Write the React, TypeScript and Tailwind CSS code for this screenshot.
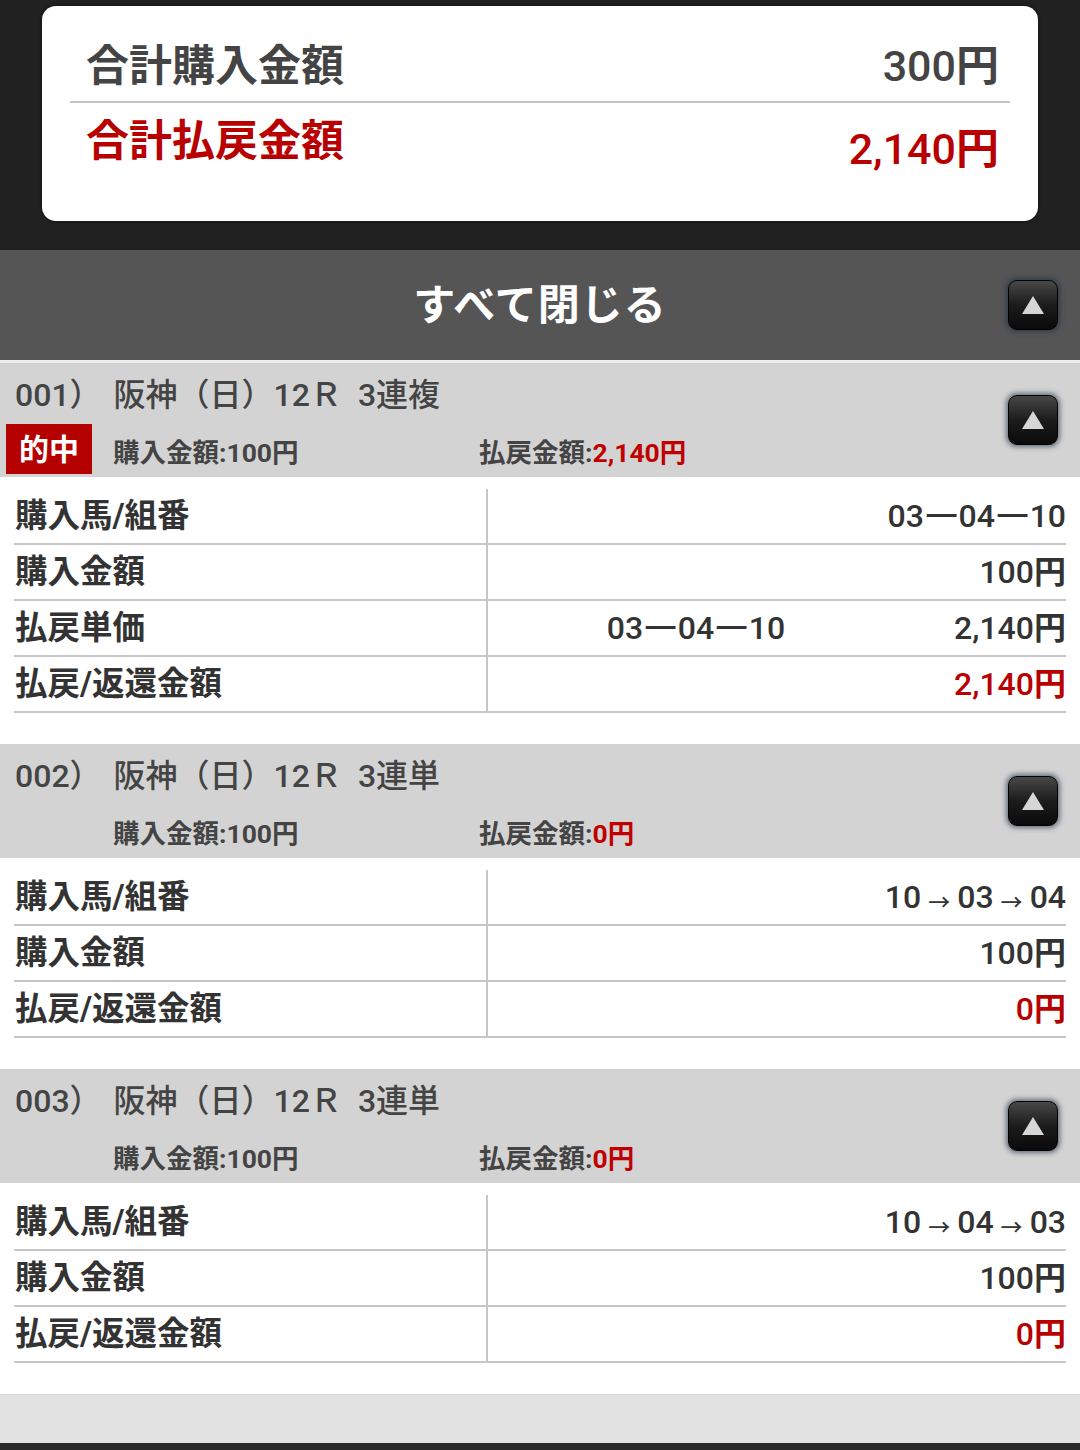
const font = "font-['Roboto','Noto_Sans_CJK_JP',sans-serif]"

type Row = { label: string; mid?: React.ReactNode; value: React.ReactNode; red?: boolean }

type Bet = {
  no: string
  kind: string
  hit: boolean
  payout: string
  rows: Row[]
}

const Arrow = () => <span className="text-[22px] mx-[7px] relative top-[2px]">→</span>
const Dash = () => <span className="inline-block scale-x-[1.4] mx-[5px]">—</span>

// digits in Roboto, the yen sign heavier like the reference
const Yen = ({ v }: { v: string }) => (
  <>
    {v}
    <span className="font-bold">円</span>
  </>
)

const Combo = ({ a, b, c }: { a: string; b: string; c: string }) => (
  <>
    {a}
    <Dash />
    {b}
    <Dash />
    {c}
  </>
)

const bets: Bet[] = [
  {
    no: '001',
    kind: '3連複',
    hit: true,
    payout: '2,140円',
    rows: [
      { label: '購入馬/組番', value: <Combo a="03" b="04" c="10" /> },
      { label: '購入金額', value: <Yen v="100" /> },
      { label: '払戻単価', mid: <Combo a="03" b="04" c="10" />, value: <Yen v="2,140" /> },
      { label: '払戻/返還金額', value: <Yen v="2,140" />, red: true },
    ],
  },
  {
    no: '002',
    kind: '3連単',
    hit: false,
    payout: '0円',
    rows: [
      {
        label: '購入馬/組番',
        value: (
          <>
            10<Arrow />03<Arrow />04
          </>
        ),
      },
      { label: '購入金額', value: <Yen v="100" /> },
      { label: '払戻/返還金額', value: <Yen v="0" />, red: true },
    ],
  },
  {
    no: '003',
    kind: '3連単',
    hit: false,
    payout: '0円',
    rows: [
      {
        label: '購入馬/組番',
        value: (
          <>
            10<Arrow />04<Arrow />03
          </>
        ),
      },
      { label: '購入金額', value: <Yen v="100" /> },
      { label: '払戻/返還金額', value: <Yen v="0" />, red: true },
    ],
  },
]

const ToggleButton = () => (
  <button className="w-[50px] h-[50px] rounded-[9px] border border-black bg-gradient-to-b from-[#484848] via-[#1c1c1c] to-[#0a0a0a] shadow-[0_0_5px_2px_rgba(25,45,70,0.6)] flex items-center justify-center">
    <svg width="22" height="18" viewBox="0 0 22 18">
      <polygon points="11,0 22,18 0,18" fill="#d6d6d6" />
    </svg>
  </button>
)

const BetItem = ({ bet }: { bet: Bet }) => (
  <div className="bg-white pb-[31px]">
    <div className="bg-[#d3d3d3] h-[114px] flex items-center">
      <div className="flex-1 flex flex-col">
        <div className="h-[58px] flex items-center pl-[15px] text-[32px] font-medium text-[#444] leading-none">
          <span>{bet.no}）</span>
          <span className="ml-[12px]">阪神（日）12Ｒ&nbsp;&nbsp;{bet.kind}</span>
        </div>
        <div className="h-[50px] flex items-center pl-[6px]">
          {bet.hit ? (
            <div className="w-[86px] h-[50px] bg-[#b50000] text-white text-[30px] font-bold flex items-center justify-center">
              的中
            </div>
          ) : (
            <div className="w-[86px]" />
          )}
          <div className="ml-[21px] w-[366px] text-[26.5px] font-bold text-[#444] mt-[8px]">購入金額:100円</div>
          <div className="text-[26.5px] font-bold text-[#444] mt-[8px]">
            払戻金額:<span className="text-[#c00000]">{bet.payout}</span>
          </div>
        </div>
      </div>
      <div className="pr-[22px]">
        <ToggleButton />
      </div>
    </div>
    <div className="px-[14px] pt-[12px]">
      {bet.rows.map((row, i) => (
        <div key={i} className="flex h-[56px] border-b-2 border-[#c6c6c6]">
          <div className="w-[472px] shrink-0 flex items-center pl-[1px] text-[32.5px] font-bold text-[#333]">{row.label}</div>
          <div className="flex-1 min-w-0 flex items-center border-l-2 border-[#c6c6c6]">
            <div className="w-[416px] min-w-0 shrink text-center text-[32px] font-medium text-[#333] whitespace-nowrap">{row.mid}</div>
            <div className={`ml-auto shrink-0 text-right text-[32px] font-medium whitespace-nowrap ${row.red ? 'text-[#b80000]' : 'text-[#333]'}`}>
              {row.value}
            </div>
          </div>
        </div>
      ))}
    </div>
  </div>
)

export default function App() {
  return (
    <div className={`${font} w-[1080px] h-[1450px] bg-[#2a2a2a] overflow-hidden`}>
      <div className="bg-[#212121] pt-[6px] pb-[29px] px-[42px]">
        <div className="bg-white rounded-[14px] h-[215px] px-[28px] shadow-[0_0_4px_rgba(0,0,0,0.5)]">
          <div className="h-[95px] pt-[26px] pl-[16px] pr-[11px] flex items-center justify-between">
            <span className="text-[43px] font-bold text-[#444]">合計購入金額</span>
            <span className="text-[43px] font-medium text-[#444]">
              <Yen v="300" />
            </span>
          </div>
          <div className="h-[2px] bg-[#c4c4c4]" />
          <div className="h-[76px] pl-[16px] pr-[11px] flex items-center justify-between">
            <span className="text-[43px] font-bold text-[#b80000]">合計払戻金額</span>
            <span className="text-[43px] font-medium text-[#b80000] mt-[16px]">
              <Yen v="2,140" />
            </span>
          </div>
        </div>
      </div>

      <div className="bg-[#555555] h-[113px] border-b-[3px] border-[#eeeeee] grid grid-cols-[1fr_auto_1fr] items-center">
        <div />
        <div className="text-[42px] font-bold text-white tracking-[1px]">すべて閉じる</div>
        <div className="justify-self-end pr-[22px]">
          <ToggleButton />
        </div>
      </div>

      {bets.map((bet) => (
        <BetItem key={bet.no} bet={bet} />
      ))}

      <div className="h-[49px] bg-[#e2e2e2] border-t border-[#d6d6d6]" />
    </div>
  )
}
